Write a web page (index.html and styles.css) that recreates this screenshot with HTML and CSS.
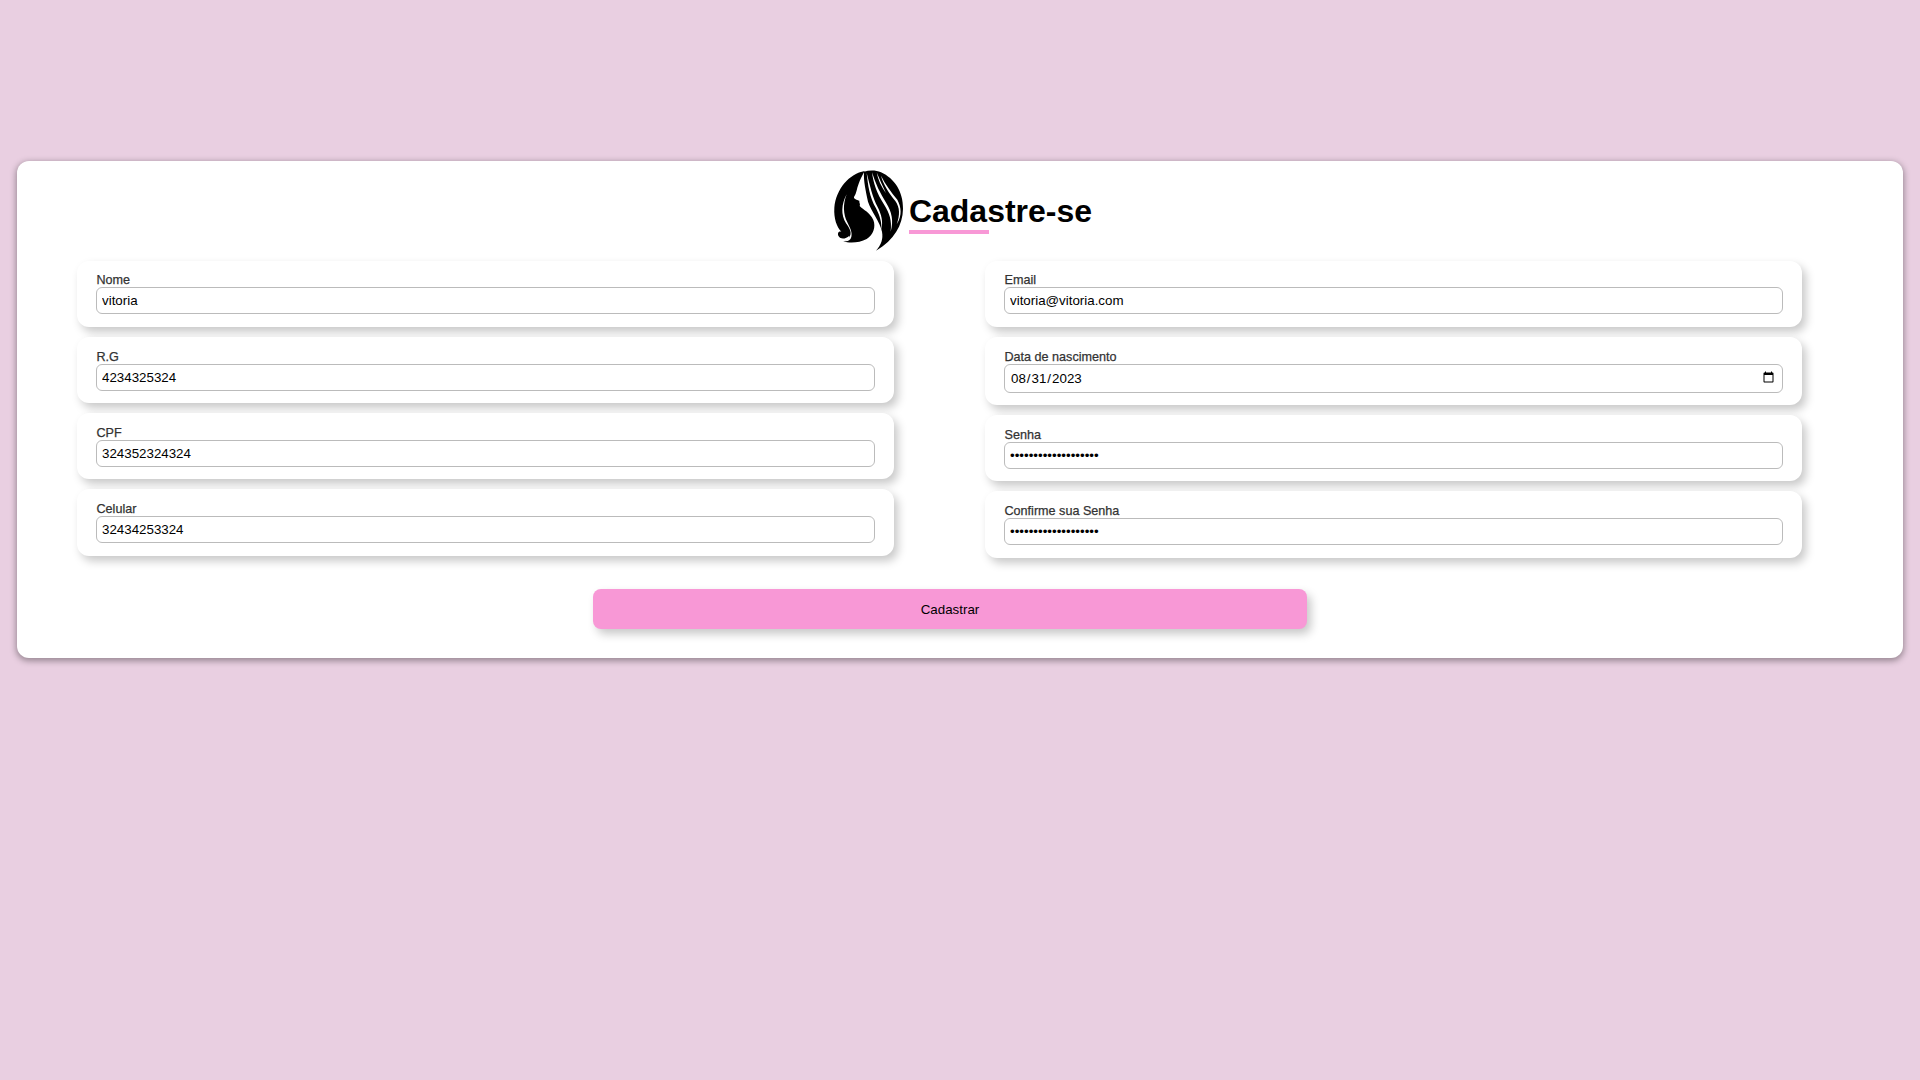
FILE: index.html
```html
<!DOCTYPE html>
<html lang="pt-BR">
<head>
    <meta charset="UTF-8">
    <meta name="viewport" content="width=device-width, initial-scale=1.0">
    <title>Cadastre-se</title>
    <link rel="stylesheet" href="styles.css">
</head>
<body>

<div class="container">
    <div class="header">
        <svg class="logo" viewBox="0 0 240 270" aria-hidden="true">
            <!-- cabelo lado esquerdo + rosto -->
            <path fill="#000" d="M116 18 C70 26 30 72 25 128 C23 160 32 185 46 200 C38 197 33 205 38 214 C44 224 60 222 70 212 C74 222 60 228 52 228 C68 236 100 234 122 222 C142 210 150 185 142 165 C132 142 112 135 101 123 C104 118 99 113 100 107 C93 105 82 101 84 96 C92 84 92 70 98 56 C102 44 110 30 116 18 Z"/>
            <!-- cabelo lado direito -->
            <path fill="#000" d="M114 20 C130 15 150 15 165 22 C205 40 232 80 231 132 C230 180 205 225 150 257 C166 238 172 222 168 200 C162 170 136 140 126 110 C120 80 112 48 114 20 Z"/>
            <!-- mechas -->
            <path fill="#fff" d="M62 88 C46 118 44 150 60 175 C72 192 80 205 68 220 C60 230 50 226 46 222 C52 232 72 232 76 216 C80 200 70 186 64 172 C52 148 50 118 62 88 Z"/>
            <path fill="#fff" d="M122 24 C126 60 130 95 150 130 C160 150 168 170 166 195 C172 170 166 148 156 128 C138 95 132 60 122 24 Z"/>
            <path fill="#fff" d="M138 22 C142 55 152 85 175 120 C190 145 198 165 194 200 C204 165 196 140 182 116 C162 85 148 55 138 22 Z"/>
            <path fill="#fff" d="M152 22 C156 45 166 65 180 85 C170 62 160 42 152 22 Z"/>
            <path fill="#fff" d="M165 32 C172 60 190 85 208 108 C222 128 222 150 212 178 C230 150 225 125 214 104 C196 82 178 58 165 32 Z"/>
        </svg>
        <div class="title-box">
            <h1>Cadastre-se</h1>
        </div>
    </div>

    <form class="form-grid">
        <div class="coluna">
            <div class="campo">
                <label for="nome">Nome</label>
                <input type="text" id="nome" value="vitoria">
            </div>
            <div class="campo">
                <label for="rg">R.G</label>
                <input type="text" id="rg" value="4234325324">
            </div>
            <div class="campo">
                <label for="cpf">CPF</label>
                <input type="text" id="cpf" value="324352324324">
            </div>
            <div class="campo">
                <label for="celular">Celular</label>
                <input type="text" id="celular" value="32434253324">
            </div>
        </div>
        <div class="coluna">
            <div class="campo">
                <label for="email">Email</label>
                <input type="text" id="email" value="vitoria@vitoria.com">
            </div>
            <div class="campo">
                <label for="nascimento">Data de nascimento</label>
                <input type="date" id="nascimento" value="2023-08-31">
            </div>
            <div class="campo">
                <label for="senha">Senha</label>
                <input type="password" id="senha" value="vitoria123456789012">
            </div>
            <div class="campo">
                <label for="confirma">Confirme sua Senha</label>
                <input type="password" id="confirma" value="vitoria123456789012">
            </div>
        </div>
        <div class="acoes">
            <button type="submit">Cadastrar</button>
        </div>
    </form>
</div>

</body>
</html>
```

FILE: styles.css
```css
* {
    box-sizing: border-box;
}
body {
    font-family: "Liberation Sans", Arial, sans-serif;
    background-color: #e9cfe1;
    margin: 0;
    padding: 161px 17px 0;
    height: 100vh;
    overflow: hidden;
}
.container {
    background-color: #fff;
    height: 497px;
    padding: 4px 101px 0 60px;
    border-radius: 12px;
    box-shadow: 0 2px 6px 1px rgba(0, 0, 0, 0.35);
}
.header {
    display: flex;
    justify-content: center;
    margin-left: 39px;
    height: 95.6px;
}
.logo {
    width: 80px;
    height: 90px;
    margin-right: 3px;
}
.title-box {
    margin-top: 28px;
}
h1 {
    margin: 0;
    font-size: 32px;
    line-height: 37px;
    color: #000;
}
h1::after {
    content: "";
    display: block;
    width: 80px;
    height: 4px;
    margin-top: 0;
    background-color: #f898d6;
}
.form-grid {
    display: grid;
    grid-template-columns: 817px 817px;
    column-gap: 91px;
}
.coluna {
    display: flex;
    flex-direction: column;
    gap: 10px;
}
.campo {
    display: flex;
    flex-direction: column;
    padding: 12.7px 19px 12.6px;
    border-radius: 12px;
    background-color: #fff;
    box-shadow: 4px 5px 10px rgba(0, 0, 0, 0.22);
}
label {
    font-size: 12.6px;
    line-height: 14px;
    color: #333;
    padding-left: 0.5px;
    -webkit-text-stroke: 0.25px #333;
}
input {
    width: 100%;
    padding: 5px;
    border: 1px solid #bbb;
    border-radius: 6px;
    font-family: inherit;
    font-size: 13.33px;
    color: #000;
    background-color: #fff;
}
input[type="date"] {
    height: 29px;
}
.acoes {
    grid-column: 1 / -1;
    display: flex;
    justify-content: center;
    margin-top: 31px;
    padding-left: 21px;
}
button {
    width: 714px;
    height: 40px;
    padding: 1px 0 0;
    background-color: #f898d6;
    border: none;
    border-radius: 8px;
    color: #000;
    font-family: inherit;
    font-size: 13.33px;
    box-shadow: 4px 5px 10px rgba(0, 0, 0, 0.22);
    cursor: pointer;
}
```
